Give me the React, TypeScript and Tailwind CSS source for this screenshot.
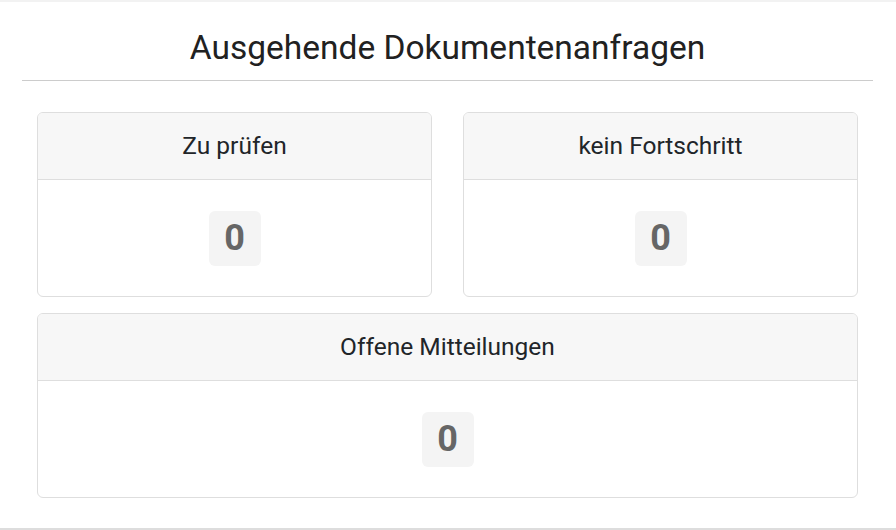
import React from 'react';

type StatCardProps = {
  title: string;
  count: number;
};

const StatCard: React.FC<StatCardProps> = ({ title, count }) => (
  <div className="flex flex-col overflow-hidden rounded-[6px] border border-[#dedede] bg-white">
    <div className="flex h-[67px] items-center justify-center border-b border-[#dedede] bg-[#f7f7f7] pt-[1px] text-[24.5px] text-[#212529]">
      {title}
    </div>
    <div className="flex h-[116px] items-center justify-center">
      <span className="flex h-[55px] w-[52px] items-center justify-center rounded-[6px] bg-[#f4f4f4] text-[36px] font-bold text-[#666666]">
        {count}
      </span>
    </div>
  </div>
);

export default function App() {
  return (
    <div
      className="flex h-[530px] w-full flex-col bg-white"
      style={{ fontFamily: 'Roboto, "Noto Sans", sans-serif' }}
    >
      <div className="h-[2px] bg-[#f2f2f2]" />
      <div className="mx-[22px] mr-[23px] flex-1">
        <h1 className="flex h-[79px] items-center justify-center border-b border-[#cccccc] pt-[14px] text-[33.5px] font-normal text-[#212121]">
          Ausgehende Dokumentenanfragen
        </h1>
        <div className="flex flex-col gap-[16px] px-[15px] pt-[31px]">
          <div className="grid grid-cols-2 gap-[31px]">
            <StatCard title="Zu prüfen" count={0} />
            <StatCard title="kein Fortschritt" count={0} />
          </div>
          <StatCard title="Offene Mitteilungen" count={0} />
        </div>
      </div>
      <div className="h-[2px] bg-[#dddddd]" />
    </div>
  );
}
